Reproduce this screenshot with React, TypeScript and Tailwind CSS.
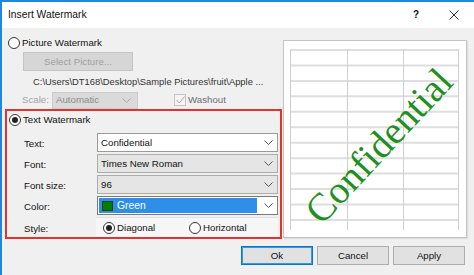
import React from "react";

function Radio({ checked = false }: { checked?: boolean }) {
  return (
    <span className="flex h-[12px] w-[12px] shrink-0 items-center justify-center rounded-full border border-[#333333] bg-white">
      {checked ? <span className="h-[6px] w-[6px] rounded-full bg-[#222222]" /> : null}
    </span>
  );
}

function Chevron({ color = "#555555" }: { color?: string }) {
  return (
    <svg width="9" height="5" viewBox="0 0 9 5" className="shrink-0">
      <path d="M0.5 0.5 L4.5 4.5 L8.5 0.5" fill="none" stroke={color} strokeWidth="1" />
    </svg>
  );
}

function Combo({ value, grey = false }: { value: string; grey?: boolean }) {
  return (
    <div
      className={`flex h-[19px] w-[181px] items-center border pl-[3px] pr-[4px] ${
        grey ? "border-[#acacac] bg-[#e5e5e5]" : "border-[#9a9a9a] bg-white"
      }`}
    >
      <span className="flex-1 truncate">{value}</span>
      <Chevron />
    </div>
  );
}

function Row({ label, children }: { label: string; children: React.ReactNode }) {
  return (
    <div className="flex h-[19px] items-center">
      <span className="w-[90px] pl-[17px] pt-[3px]">{label}</span>
      {children}
    </div>
  );
}

const rows = Array.from({ length: 12 }, (_, i) => 9 + i * 15.45);

export default function App() {
  return (
    <div className="flex h-[275px] w-[474px] flex-col overflow-hidden border-l-2 border-t-2 border-[#1f87e0] bg-[#f0f0f0] font-['Liberation_Sans',Arial,sans-serif] text-[9.7px] leading-[12px] text-[#111111]">
      <div className="flex h-[26px] shrink-0 items-center bg-white pl-[6px]">
        <span className="flex-1 text-[10.3px]">Insert Watermark</span>
        <span className="mr-[30px] text-[10px] font-bold">?</span>
        <svg width="10" height="10" viewBox="0 0 10 10" className="mr-[15px]">
          <path d="M0.5 0.5 L9.5 9.5 M9.5 0.5 L0.5 9.5" stroke="#333333" strokeWidth="1" />
        </svg>
      </div>

      <div className="flex">
        <div className="flex w-[280px] shrink-0 flex-col">
          <div className="ml-[6px] mt-[8px] flex h-[13px] items-center gap-[2px]">
            <Radio />
            <span>Picture Watermark</span>
          </div>
          <div className="ml-[21px] mt-[3px] flex h-[19px] w-[110px] items-center justify-center border border-[#c4c4c4] bg-[#d6d6d6] text-[#a0a0a0]">
            Select Picture...
          </div>
          <div className="ml-[31px] mt-[5px] h-[12px] whitespace-nowrap text-[9.4px] text-[#333333]">
            C:\Users\DT168\Desktop\Sample Pictures\fruit\Apple ...
          </div>
          <div className="mt-[3px] flex h-[18px] items-center">
            <span className="ml-[20px] w-[30px] text-[#a3a3a3]">Scale:</span>
            <div className="flex h-[17px] w-[86px] items-center border border-[#cccccc] bg-[#dadada] pl-[3px] pr-[6px] text-[#8a8a8a]">
              <span className="flex-1">Automatic</span>
              <Chevron color="#a8a8a8" />
            </div>
            <span className="ml-[36px] flex h-[12px] w-[12px] items-center justify-center border border-[#c4c4c4] bg-[#f4f4f4]">
              <svg width="9" height="8" viewBox="0 0 9 8">
                <path d="M0.5 4 L3.3 7 L8.5 0.5" fill="none" stroke="#a5a5a5" strokeWidth="1" />
              </svg>
            </span>
            <span className="ml-[2px] text-[#6e6e6e]">Washout</span>
          </div>

          <div className="ml-[3px] flex h-[130px] w-[277px] flex-col border-2 border-[#e0352b]">
            <div className="ml-[2px] mt-[3px] flex h-[12px] items-center gap-[2px]">
              <Radio checked />
              <span>Text Watermark</span>
            </div>
            <div className="mt-[7px] flex flex-col gap-[2px]">
              <Row label="Text:">
                <Combo value="Confidential" />
              </Row>
              <Row label="Font:">
                <Combo value="Times New Roman" grey />
              </Row>
              <Row label="Font size:">
                <Combo value="96" grey />
              </Row>
              <Row label="Color:">
                <div className="flex h-[19px] w-[181px] items-center border border-[#7a7a7a] bg-white pr-[4px]">
                  <div className="ml-[1px] flex h-[15px] flex-1 items-center bg-[#2f8fe8] pl-[3px] text-white">
                    <span className="mr-[4px] h-[10px] w-[11px] border border-[#1a3a1a] bg-[#008000]" />
                    <span className="text-[10.3px]">Green</span>
                  </div>
                  <span className="ml-[7px]">
                    <Chevron />
                  </span>
                </div>
              </Row>
              <div className="flex h-[20px] items-center">
                <span className="w-[89px] pl-[17px] pt-[4px]">Style:</span>
                <div className="flex h-[20px] w-[182px] items-center border-t border-[#e2e2e2] bg-[#f6f6f6] pl-[7px]">
                  <Radio checked />
                  <span className="ml-[2px] w-[72px]">Diagonal</span>
                  <Radio />
                  <span className="ml-[2px]">Horizontal</span>
                </div>
              </div>
            </div>
          </div>
        </div>

        <div className="relative ml-[1px] mt-[12px] h-[198px] w-[184px] overflow-hidden border border-[#c4c4c4] bg-white shadow-[1px_1px_1px_rgba(0,0,0,0.08)]">
          <svg width="184" height="198" viewBox="0 0 184 198" className="absolute left-0 top-0">
            {rows.map((y) => (
              <line key={y} x1="6" x2="175" y1={y} y2={y} stroke="#dedede" strokeWidth="2" />
            ))}
            {[6.5, 63.5, 119.5, 174.5].map((x) => (
              <line key={x} x1={x} x2={x} y1="8" y2="189" stroke="#cfcfcf" strokeWidth="1" />
            ))}
          </svg>
          <div className="absolute inset-0 flex items-center justify-center">
            <span className="translate-x-[3px] translate-y-[6px] rotate-[-47deg] whitespace-nowrap font-['Liberation_Serif','Times_New_Roman',serif] text-[39px] leading-none text-[#1f8f1f]">
              Confidential
            </span>
          </div>
        </div>
      </div>

      <div className="mt-[7px] flex justify-end gap-[4px] pr-[9px]">
        <div className="flex h-[19px] w-[72px] items-center justify-center border border-[#0078d7] bg-[#e1e1e1] shadow-[inset_0_0_0_1px_#3c96e0]">
          Ok
        </div>
        <div className="flex h-[19px] w-[72px] items-center justify-center border border-[#adadad] bg-[#e1e1e1]">
          Cancel
        </div>
        <div className="flex h-[19px] w-[72px] items-center justify-center border border-[#adadad] bg-[#e1e1e1]">
          Apply
        </div>
      </div>
    </div>
  );
}
